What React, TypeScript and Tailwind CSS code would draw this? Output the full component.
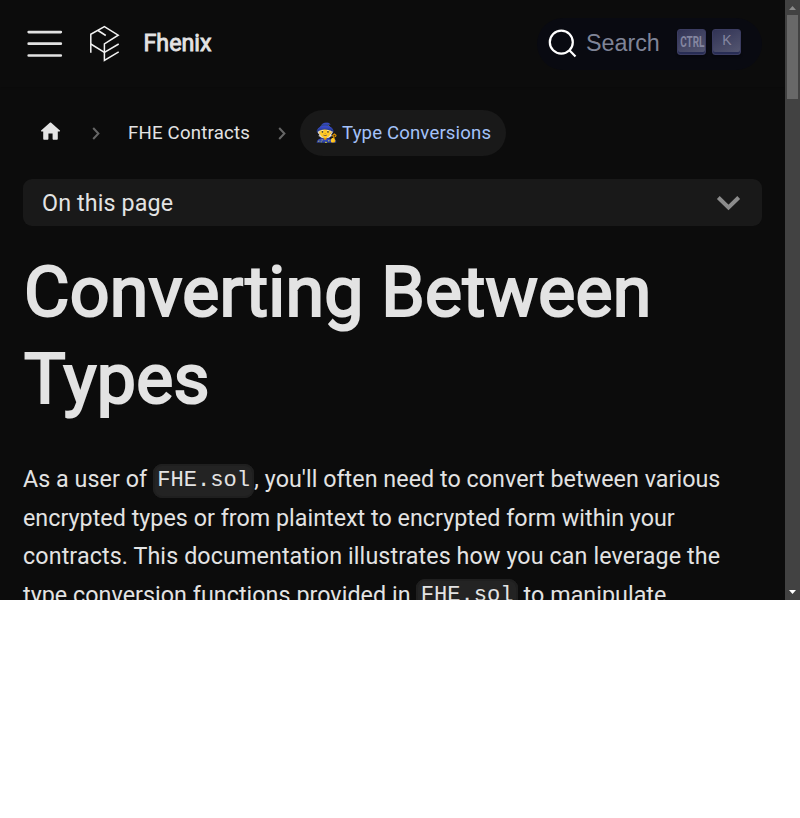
import React from "react";

function Logo() {
  return (
    <svg width="32" height="38" viewBox="0 0 32 38" fill="none" stroke="#f2f2f2" strokeWidth="1.5" className="ml-[26px] shrink-0">
      <path d="M1.8 27.8V9.3L15.4 1.6L29.2 10.2L15.4 18.8V35.5L29.7 26.8" />
      <path d="M9 5.5L16.8 10.5" />
      <path d="M1.8 19L15.4 27.4L29.7 19" />
    </svg>
  );
}

function Key({ children }: { children: React.ReactNode }) {
  return (
    <kbd className="flex h-[26px] w-[29px] items-center justify-center rounded-[3px] border border-[#3b3c61] bg-linear-[-26.5deg,#565872,#313355] pb-[2px] text-[#8486a0] shadow-[inset_0_-2px_0_0_#282d55,0_2px_2px_0_rgba(3,4,9,0.3)]">
      {children}
    </kbd>
  );
}

function Navbar() {
  return (
    <nav className="flex h-[87px] shrink-0 items-center pr-[23px] pl-[27px] shadow-[0_1px_2px_0_rgba(0,0,0,0.15)]">
      <svg width="36" height="28" viewBox="0 0 36 28" stroke="#e3e3e3" strokeWidth="2.7" strokeLinecap="round" className="shrink-0">
        <path d="M1.7 2.1H33.8M1.7 13.7H33.8M1.7 25.5H33.8" />
      </svg>
      <Logo />
      <span className="ml-[22.5px] text-[23.27px] leading-none text-[#e3e3e3] [-webkit-text-stroke:0.86px_#e3e3e3]">Fhenix</span>
      <button className="ml-auto flex h-[52px] w-[225px] items-center rounded-[40px] bg-[#090a11] pl-[11px]">
        <svg width="29" height="29" viewBox="0 0 29 29" fill="none" stroke="#ffffff" strokeWidth="2.2" className="shrink-0">
          <circle cx="13.3" cy="13.2" r="11.5" />
          <path d="M21.4 21.2L27.5 27.4" />
        </svg>
        <span className="ml-[9px] font-['Liberation_Sans',sans-serif] text-[23.3px] leading-none text-[#7f8497]">Search</span>
        <span className="mb-[4px] ml-[17.5px] flex gap-[6px]">
          <Key>
            <span className="flex w-[22px] justify-center pt-[3px]">
              <span className="scale-x-[0.66] font-['Roboto',sans-serif] text-[15px] leading-none font-bold">CTRL</span>
            </span>
          </Key>
          <Key>
            <span className="pb-[2px] font-['Liberation_Sans',sans-serif] text-[14px] leading-none">K</span>
          </Key>
        </span>
      </button>
    </nav>
  );
}

function Separator() {
  return (
    <svg width="8" height="13" viewBox="0 0 8 13" fill="none" stroke="#666666" strokeWidth="2" className="mr-px shrink-0">
      <path d="M1.2 1L6.4 6.5L1.2 12" />
    </svg>
  );
}

function Breadcrumbs() {
  return (
    <div className="flex h-[46px] items-center pl-[15px] text-[18.6px]">
      <svg width="25" height="25" viewBox="0 0 24 24" fill="#e3e3e3" className="mb-[3px] shrink-0">
        <path d="M10 19v-5h4v5c0 .55.45 1 1 1h3c.55 0 1-.45 1-1v-7h1.7c.46 0 .68-.57.33-.87L12.67 3.6c-.38-.34-.96-.34-1.34 0l-8.36 7.53c-.34.3-.13.87.33.87H5v7c0 .55.45 1 1 1h3c.55 0 1-.45 1-1z" />
      </svg>
      <span className="ml-[29px] flex"><Separator /></span>
      <span className="mt-[2px] ml-[27px] w-[122px] tracking-[0.22px] whitespace-nowrap text-[#e3e3e3]">FHE Contracts</span>
      <span className="ml-[28px] flex"><Separator /></span>
      <span className="ml-[13px] flex h-full w-[206px] items-center rounded-full bg-[#191919] pt-[2px] pl-[14.5px] tracking-[0.15px] whitespace-nowrap text-[#a4c2f9]">
        🧙 Type Conversions
      </span>
    </div>
  );
}

function Code({ children }: { children: React.ReactNode }) {
  return (
    <code className="rounded-[9px] border-2 border-[#1f1f1f] bg-[#232323] px-[2.3px] pt-[2px] pb-[3px] align-[1.6px] font-['Liberation_Mono',monospace] text-[22.1px] leading-none tracking-normal">
      {children}
    </code>
  );
}

function Scrollbar() {
  return (
    <div className="flex w-[15px] shrink-0 flex-col items-center bg-[#424242]">
      <svg width="15" height="15" viewBox="0 0 15 15" fill="#8b8b8b"><path d="M4 10L7.5 6L11 10Z" /></svg>
      <div className="h-[84px] w-[11px] bg-[#686868]" />
      <svg width="15" height="15" viewBox="0 0 15 15" fill="#ffffff" className="mt-auto"><path d="M4 5L7.5 9L11 5Z" /></svg>
    </div>
  );
}

export default function App() {
  return (
    <div className="h-[818px] w-[800px] overflow-hidden bg-white">
      <div className="flex h-[600px] overflow-hidden bg-[#0c0c0c] font-['Roboto',sans-serif] text-[#e3e3e3]">
        <div className="flex h-[600px] w-[785px] flex-col overflow-hidden">
          <Navbar />
          <main className="px-[23px] pt-[23px]">
            <Breadcrumbs />
            <button className="mt-[23px] flex h-[47px] w-full items-center justify-between rounded-[9px] bg-[#191919] pr-[21px] pl-[19px] text-[23.27px] tracking-[0.13px]">
              <span className="pt-[2px]">On this page</span>
              <svg width="25" height="16" viewBox="0 0 25 16" fill="none" stroke="#8c8c8c" strokeWidth="4">
                <path d="M2.3 2.5L12.5 12.5L22.7 2.5" />
              </svg>
            </button>
            <h1 className="mt-[23px] pl-px text-[69.8px] leading-[87.3px] tracking-[0.27px] [-webkit-text-stroke:2.2px_#e3e3e3]">
              Converting Between
              <br />
              Types
            </h1>
            <p className="mt-[36.8px] text-[23.27px] leading-[38.4px] whitespace-nowrap">
              <span className="tracking-[0.045px]">
                As a user of <Code>FHE.sol</Code>, you'll often need to convert between various
              </span>
              <br />
              <span className="tracking-[0.03px]">encrypted types or from plaintext to encrypted form within your</span>
              <br />
              <span className="tracking-[0.11px]">contracts. This documentation illustrates how you can leverage the</span>
              <br />
              <span className="tracking-[0.05px]">
                type conversion functions provided in <Code>FHE.sol</Code> to manipulate
              </span>
            </p>
          </main>
        </div>
        <Scrollbar />
      </div>
    </div>
  );
}
